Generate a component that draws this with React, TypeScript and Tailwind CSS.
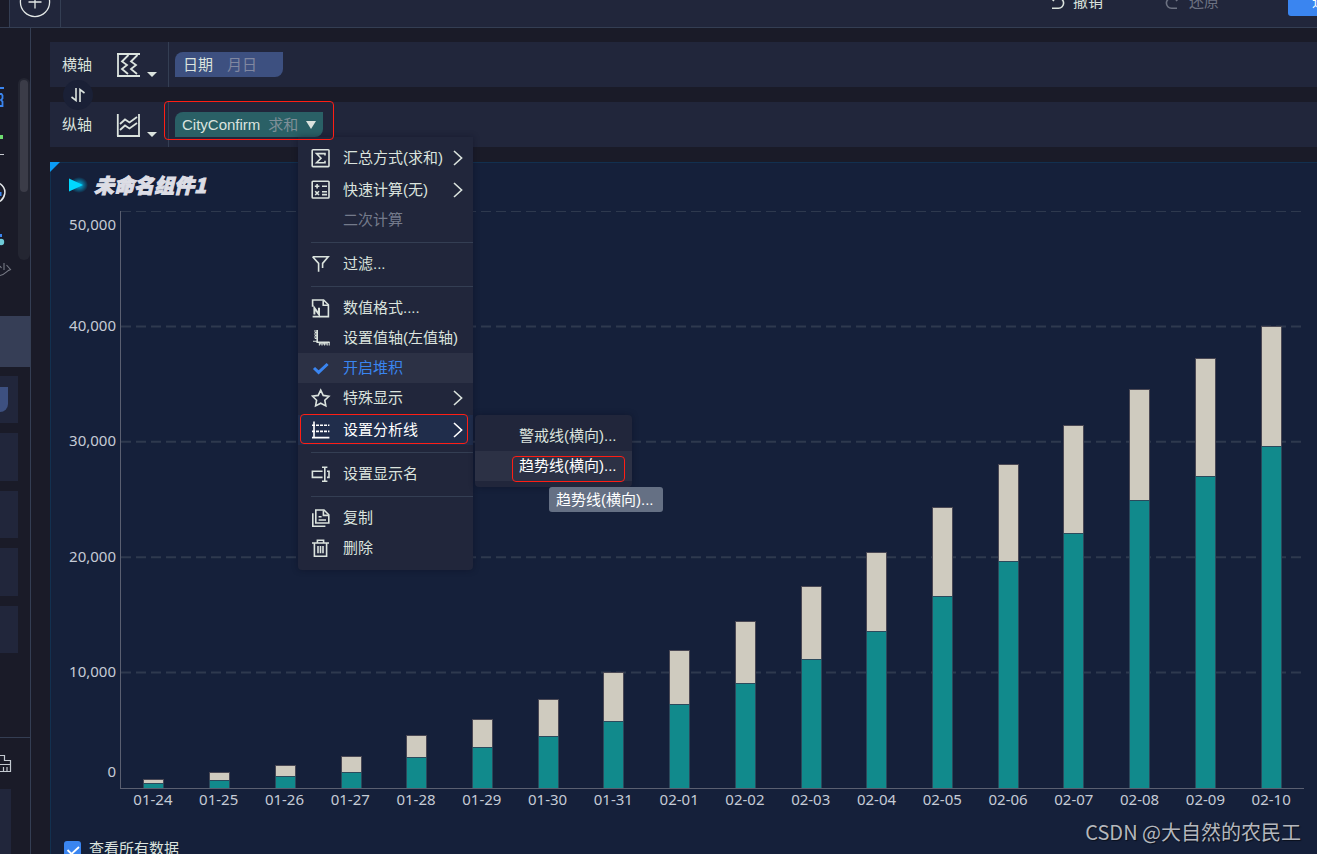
import type { ReactNode } from 'react';

type Day = { date: string; total: number; lower: number };

const MAX = 50000;

const days: Day[] = [
  { date: '01-24', total: 780, lower: 450 },
  { date: '01-25', total: 1360, lower: 670 },
  { date: '01-26', total: 1980, lower: 1020 },
  { date: '01-27', total: 2760, lower: 1390 },
  { date: '01-28', total: 4580, lower: 2680 },
  { date: '01-29', total: 6000, lower: 3540 },
  { date: '01-30', total: 7740, lower: 4500 },
  { date: '01-31', total: 10020, lower: 5800 },
  { date: '02-01', total: 11950, lower: 7250 },
  { date: '02-02', total: 14450, lower: 9080 },
  { date: '02-03', total: 17500, lower: 11150 },
  { date: '02-04', total: 20440, lower: 13570 },
  { date: '02-05', total: 24330, lower: 16630 },
  { date: '02-06', total: 28120, lower: 19680 },
  { date: '02-07', total: 31500, lower: 22060 },
  { date: '02-08', total: 34620, lower: 25000 },
  { date: '02-09', total: 37220, lower: 27050 },
  { date: '02-10', total: 40050, lower: 29640 },
];

function Icon({ children }: { children?: ReactNode }) {
  return (
    <svg viewBox="0 0 20 20" className="h-5 w-5 shrink-0" fill="none" stroke="currentColor" strokeWidth="1.6" aria-hidden="true">
      {children}
    </svg>
  );
}

const icons = {
  sum: (
    <>
      <rect x="1.2" y="1.8" width="16.8" height="16.8" rx="0.8" />
      <path d="M14 7.600V5.600H5.500L10 10.200 5.500 14.800H14v-2" />
    </>
  ),
  calc: (
    <>
      <rect x="1.2" y="1.200" width="16.8" height="16.8" rx="0.8" />
      <path d="M3.8 6.2h4.6M6.1 3.9v4.6M11 6.2h5M11 11.8h5M11 14.6h5M4.2 11.2l3.8 3.8M8 11.2L4.2 15" />
    </>
  ),
  filter: <path d="M1.6 2.8h15.6L11.6 9.400v4.600M1.600 2.800L7.600 9.400v8.400" />,
  number: (
    <>
      <path d="M1.600 8.800V2h11l4.800 4.800v11.800H1.600" />
      <path d="M12.200 2.400v4.800h4.800" />
      <path d="M3.400 16.600V10l4.600 6.400V9.800" strokeWidth="2" />
    </>
  ),
  axis: (
    <>
      <path d="M6.200 2v12.200h12.400" />
      <path d="M3 3h3M3 6h3M3 9h3M2 13.200h4M3.800 4.500h2M3.800 7.500h2M3.800 10.500h2" strokeWidth="1.1" />
      <path d="M8.400 14v3.400M11 14v3.400M13.600 14v3.400M16.200 14v3.400M18.200 14v3.400M9.700 14v2.600M12.300 14v2.600M14.900 14v2.600" strokeWidth="1.1" />
    </>
  ),
  check: <path d="M3 10l4.6 4.4L16.6 6" strokeWidth="3" />,
  star: <path d="M9.7 2.2l2.500 5.200 5.700.800-4.100 4 1 5.700-5.100-2.700-5.100 2.700 1-5.700-4.100-4 5.700-.800z" />,
  lines: (
    <>
      <path d="M3 1.400v16.500M1 17.600h17.400" />
      <path d="M1 5.200h3M1 11.400h3" />
      <path d="M5 5.200h13.400M5 11.400h13.400" strokeDasharray="3 1" />
    </>
  ),
  rename: (
    <>
      <path d="M11.600 7.200H1.400v6.200h10.200M16 7.200h2v6.200h-2" />
      <path d="M13.800 3.200v14M11 3.200h5.400M11 17.200h5.400" />
    </>
  ),
  copy: (
    <>
      <path d="M4.800 2h8.200l4.800 4.800v8.200H4.800z" />
      <path d="M12.400 2.400v5h5M7.600 8.800h3M7.600 12h7.400M1.800 5.200v13h12.600" />
    </>
  ),
  trash: <path d="M1 5h17M6.400 4.800V2.200h6.200v2.600M3.400 5.200v13h12.200v-13M7 8v7.200M9.500 8v7.200M12 8v7.200" />,
};

function MenuItem({
  icon,
  label,
  more,
  className = '',
}: {
  icon?: ReactNode;
  label: string;
  more?: boolean;
  className?: string;
}) {
  return (
    <button type="button" className={`flex h-[30px] w-full shrink-0 items-center pr-[9px] pl-[13px] text-left ${className}`}>
      <Icon>{icon}</Icon>
      <span className="ml-3 min-w-0 flex-1 whitespace-nowrap">{label}</span>
      {more && (
        <svg viewBox="0 0 12 16" className="h-4 w-3 shrink-0" fill="none" stroke="currentColor" strokeWidth="1.6" aria-hidden="true">
          <path d="M2 1l7.6 7L2 15" />
        </svg>
      )}
    </button>
  );
}

function Separator() {
  return <div className="mt-[7px] mb-[6px] ml-[13px] h-px shrink-0 bg-[#343e53]" />;
}

function ContextMenu() {
  return (
    <div className="absolute top-full left-[123px] z-20 flex w-[175px] flex-col rounded-b bg-[#21263b] pt-[6px] pb-[7px] text-[#dbe3de] shadow-[0_0_6px_rgba(10,14,30,0.45)]">
      <MenuItem icon={icons.sum} label="汇总方式(求和)" more className="mb-0.5" />
      <MenuItem icon={icons.calc} label="快速计算(无)" more />
      <MenuItem label="二次计算" className="text-[#747a8b]" />
      <Separator />
      <MenuItem icon={icons.filter} label="过滤..." />
      <Separator />
      <MenuItem icon={icons.number} label="数值格式...." />
      <MenuItem icon={icons.axis} label="设置值轴(左值轴)" />
      <MenuItem icon={icons.check} label="开启堆积" className="bg-[#2c3145] text-[#3a85f0]" />
      <MenuItem icon={icons.star} label="特殊显示" more className="mb-0.5" />
      <div className="relative">
        <MenuItem icon={icons.lines} label="设置分析线" more className="bg-[#202d4b] text-white" />
        <div className="pointer-events-none absolute -top-px right-[5px] left-0.5 h-[30px] rounded border border-[#ff1e14]" />
        <SubMenu />
      </div>
      <Separator />
      <MenuItem icon={icons.rename} label="设置显示名" />
      <Separator />
      <MenuItem icon={icons.copy} label="复制" />
      <MenuItem icon={icons.trash} label="删除" />
    </div>
  );
}

function SubMenu() {
  return (
    <div className="absolute top-0 left-[177px] w-[157px] rounded bg-[#21263b] py-[6px] shadow-[0_0_6px_rgba(10,14,30,0.45)]">
      <button type="button" className="flex h-[30px] w-full items-center pl-11 whitespace-nowrap">
        警戒线(横向)...
      </button>
      <div className="relative">
        <button type="button" className="flex h-[30px] w-full items-center bg-[#2c3145] pl-11 whitespace-nowrap text-white">
          趋势线(横向)...
        </button>
        <div className="pointer-events-none absolute top-[5px] right-[7px] left-[37px] h-[26px] rounded border border-[#ff1e14]" />
        <div role="tooltip" className="absolute top-9 left-[74px] flex h-[25px] items-center rounded-[3px] bg-[#657084] pr-[9px] pl-[7px] whitespace-nowrap text-white">
          趋势线(横向)...
        </div>
      </div>
    </div>
  );
}

function AxisRow({ label, icon, children }: { label: string; icon: ReactNode; children: ReactNode }) {
  return (
    <div className="flex h-[45px] shrink-0 bg-[#21263b]">
      <div className="flex w-[119px] shrink-0 items-center border-r border-[#343e53] pl-3">
        <span className="w-[53px]">{label}</span>
        <button type="button" aria-label={`${label}类型`} className="flex items-center gap-1.5">
          <svg viewBox="0 0 26 26" className="h-[26px] w-[26px]" fill="none" stroke="currentColor" strokeWidth="1.8" aria-hidden="true">
            {icon}
          </svg>
          <svg viewBox="0 0 10 5" className="mt-[19px] h-[5px] w-2.5" fill="currentColor" aria-hidden="true">
            <path d="M0 0h10L5 5z" />
          </svg>
        </button>
      </div>
      <div className="flex items-center pl-1.5">{children}</div>
    </div>
  );
}

function Header() {
  return (
    <header className="flex h-7 shrink-0 items-end overflow-hidden border-b border-[#343e53] bg-[#21263b]">
      <div className="h-full w-[9px] shrink-0 bg-[#1a1b28]" />
      <div className="flex h-[51px] w-[52px] shrink-0 items-center justify-center border-x border-[#343e53]">
        <button type="button" aria-label="添加" className="shrink-0">
          <svg viewBox="0 0 32 32" className="h-8 w-8" fill="none" stroke="#e3e8e6" strokeWidth="1.3">
            <circle cx="16" cy="16" r="14.6" />
            <path d="M9.5 16h13M16 9.500v13" />
          </svg>
        </button>
      </div>
      <div className="-mr-[51px] flex h-[51px] flex-1 items-center justify-end">
        <button type="button" className="mr-[62px] flex items-center gap-2">
          <svg viewBox="0 0 16 16" className="h-4 w-4" fill="none" stroke="currentColor" strokeWidth="1.6" aria-hidden="true">
            <path d="M5 1L2 4l3 3M2 4h7.500a5 5 0 0 1 0 10.200H3" />
          </svg>
          撤销
        </button>
        <button type="button" className="mr-[69px] flex items-center gap-2 text-[#6d7282]">
          <svg viewBox="0 0 16 16" className="h-4 w-4" fill="none" stroke="currentColor" strokeWidth="1.6" aria-hidden="true">
            <path d="M11 1l3 3-3 3M14 4H6.500a5 5 0 0 0 0 10.200H12" />
          </svg>
          还原
        </button>
        <button type="button" className="h-[29px] w-20 shrink-0 rounded-[3px] bg-[#3a85f0] pl-6 text-left whitespace-nowrap text-white">
          进入分析
        </button>
      </div>
    </header>
  );
}

function Sidebar() {
  return (
    <aside className="flex w-[31px] shrink-0 flex-col overflow-hidden border-r border-[#343e53]">
      <div className="flex h-[288px] shrink-0 items-start justify-between">
        <svg viewBox="0 0 18 288" className="h-[288px] w-[18px]" fill="none" strokeWidth="1.6" aria-hidden="true">
          <path d="M0 60h4M0 66h1.500l1 1.500v3L1 72l1.500 1.500V78H0" stroke="#3a85f0" strokeWidth="1.8" />
          <path d="M0 109h3" stroke="#6edc70" strokeWidth="4" />
          <path d="M0 126.500h4" stroke="#c6cad0" strokeWidth="1" />
          <path d="M0 155.500c3.500 2.500 5.500 6 4.700 10.500-.7 3.500-2.200 5.500-4.700 7.500" stroke="#e4e7ea" strokeWidth="1.5" />
          <path d="M0 164v4" stroke="#3a85f0" strokeWidth="3" />
          <path d="M0 207.500h2" stroke="#3a85f0" strokeWidth="3" />
          <circle cx="1" cy="214" r="3.2" fill="#6fcbd8" />
          <path d="M0 238l1.500 2M4 235v7M6.500 237l4 4.500-3 1.500M10.500 241.500C7 242 5 247 0 247.500" stroke="#777a85" strokeWidth="1.1" />
        </svg>
        <div className="mt-[50px] h-[182px] w-3 rounded-full bg-[#242632] p-0.5">
          <div className="h-28 w-2 rounded-full bg-[#3b3c48]" />
        </div>
      </div>
      <div className="h-[51px] shrink-0 bg-[#363e56]" />
      <div className="flex min-h-0 flex-1 flex-col gap-2.5 overflow-hidden pt-[9px] pr-3">
        <div className="flex h-[47px] shrink-0 items-center bg-[#21263b]">
          <div className="h-[25px] w-2 rounded-br-lg bg-[#3d5080]" />
        </div>
        <div className="h-12 shrink-0 bg-[#21263b]" />
        <div className="h-[47px] shrink-0 bg-[#21263b]" />
        <div className="h-12 shrink-0 bg-[#21263b]" />
        <div className="h-[47px] shrink-0 bg-[#21263b]" />
      </div>
      <div className="flex h-[117px] shrink-0 flex-col border-t border-[#343e53] pt-4">
        <svg viewBox="0 0 12 20" className="h-5 w-3 shrink-0" fill="none" stroke="#c3c9d0" strokeWidth="1.2" aria-hidden="true">
          <path d="M0 1.500h4.500v5h6v11H0M0 10.500h10.500M3.500 13v4M7 13v4" />
        </svg>
        <div className="mt-[15px] w-[11px] flex-1 bg-[#21263b]" />
      </div>
    </aside>
  );
}

function Chart() {
  return (
    <div className="flex min-h-0 flex-1 flex-col pr-[13px] font-['Noto_Sans',sans-serif] text-[15px] text-[#c5cbd6]">
      <div className="flex min-h-0 flex-1">
        <div className="grid w-[69px] shrink-0 grid-rows-5 pr-1 text-right leading-5">
          <span className="mt-[3px]">50,000</span>
          <span className="-mt-3">40,000</span>
          <span className="-mt-3">30,000</span>
          <span className="-mt-3">20,000</span>
          <div className="-mt-3 flex flex-col justify-between pb-2">
            <span>10,000</span>
            <span>0</span>
          </div>
        </div>
        <div className="relative flex flex-1 border-b border-l border-[#5a5f70]">
          <svg className="absolute inset-0 h-full w-full" aria-hidden="true">
            {['0%', '20%', '40%', '60%', '80%'].map((y) => (
              <line key={y} x1="0" x2="100%" y1={y} y2={y} stroke="#2e394e" strokeWidth="2" strokeDasharray="10 5" />
            ))}
          </svg>
          {days.map((d) => (
            <div key={d.date} className="relative flex flex-1 flex-col items-center justify-end">
              <div
                className="w-[21px] border border-b-0 border-[#4a4854] bg-[#cfcbbf]"
                style={{ height: `${((d.total - d.lower) / MAX) * 100}%` }}
              />
              <div className="w-[21px] border border-b-0 border-[#2b4a5c] bg-[#118a8c]" style={{ height: `${(d.lower / MAX) * 100}%` }} />
            </div>
          ))}
        </div>
      </div>
      <div className="flex h-6 shrink-0 items-start pl-[69px]">
        {days.map((d) => (
          <div key={d.date} className="flex-1 text-center leading-5">
            {d.date}
          </div>
        ))}
      </div>
    </div>
  );
}

export default function App() {
  return (
    <div className="relative flex h-screen flex-col overflow-hidden bg-[#1a1b28] font-['Liberation_Sans','Noto_Sans_CJK_SC',sans-serif] text-[15px] leading-5 text-[#dbe3de]">
      <Header />
      <div className="flex min-h-0 flex-1">
        <Sidebar />
        <main className="flex min-w-0 flex-1 flex-col gap-[15px] pt-3.5 pl-[19px]">
          <section className="relative flex flex-col gap-[15px]">
            <AxisRow label="横轴" icon={<path d="M2 2h23M2 24h23M3 2v22M13.500 3L7 9.500l5 3.500-5 4 6 5M22.500 3L16 9.500l5 3.500-5 4 6 5" />}>
              <div className="flex h-[25px] w-[108px] items-center gap-3.5 rounded-tl-lg rounded-br-lg bg-[#3d5080] pl-2">
                <span>日期</span>
                <span className="text-[#8087a0]">月日</span>
              </div>
            </AxisRow>
            <AxisRow label="纵轴" icon={<path d="M2 24h23M2.800 2v22M24 2v22M5 12l5-4.500 4.500 3L22 5M5 18l5-4.500 4.500 3L22 11" />}>
              <div className="relative">
                <button type="button" className="flex h-[25px] w-[148px] items-center rounded-tl-lg rounded-br-lg bg-[#2a6066] pl-[7px]">
                  <span>CityConfirm</span>
                  <span className="ml-2 text-[#7f8f98]">求和</span>
                  <svg viewBox="0 0 10 8" className="ml-2 h-2 w-2.5" fill="currentColor" aria-hidden="true">
                    <path d="M0 0h10L5 8z" />
                  </svg>
                </button>
                <ContextMenu />
                <div className="pointer-events-none absolute -top-[11px] -left-[11px] z-30 h-[39px] w-[170px] rounded border border-[#ff1e14]" />
              </div>
            </AxisRow>
            <button type="button" aria-label="交换横纵轴" className="absolute top-[38px] left-[13px] flex h-[30px] w-[30px] items-center justify-center rounded-full bg-[#1a2036]">
              <svg viewBox="0 0 16 14" className="h-3.5 w-4" fill="none" stroke="currentColor" strokeWidth="1.6" aria-hidden="true">
                <path d="M6 0v12.500L1.500 9M10 14V1.500L14.500 5" />
              </svg>
            </button>
          </section>
          <section className="relative flex min-h-0 flex-1 flex-col border-t border-l border-[#12304f] bg-[#15203a]">
            <svg viewBox="0 0 10 10" className="absolute -top-px -left-px h-2.5 w-2.5" fill="#0a9bf5" aria-hidden="true">
              <path d="M0 0h10L0 10z" />
            </svg>
            <div className="flex h-12 shrink-0 items-center pb-1 pl-[17px]">
              <svg viewBox="0 0 24 24" className="h-6 w-6" aria-hidden="true">
                <defs>
                  <radialGradient id="glow">
                    <stop offset="0" stopColor="#00b4e6" />
                    <stop offset="1" stopColor="#00b4e6" stopOpacity="0" />
                  </radialGradient>
                </defs>
                <ellipse cx="11" cy="12" rx="9" ry="8" fill="url(#glow)" />
                <path d="M1 5.500L15 12 1 18.500z" fill="#00d8ff" />
              </svg>
              <h1 className="ml-0.5 font-['Noto_Sans_CJK_SC',sans-serif] text-[20px] leading-6 font-black text-[#dcdde5] italic [-webkit-text-stroke:1px_#dcdde5]">未命名组件1</h1>
            </div>
            <Chart />
            <div className="h-[41px] shrink-0 overflow-hidden pt-[26px] pl-[13px]">
              <label className="flex items-center gap-2">
                <span className="grid h-[17px] w-[17px] place-items-center">
                  <input type="checkbox" defaultChecked className="peer col-start-1 row-start-1 h-[17px] w-[17px] appearance-none rounded-[3px] bg-[#2f3850] checked:bg-[#3a85f0]" />
                  <svg viewBox="0 0 17 17" className="pointer-events-none col-start-1 row-start-1 h-[17px] w-[17px] opacity-0 peer-checked:opacity-100" fill="none" stroke="#fff" strokeWidth="1.8" aria-hidden="true">
                    <path d="M3.500 9l4 4L15 6" />
                  </svg>
                </span>
                查看所有数据
              </label>
            </div>
          </section>
        </main>
      </div>
      <div className="pointer-events-none absolute right-4 bottom-2.5 font-['Noto_Sans_CJK_SC',sans-serif] text-[20px] leading-6 text-[#b4b7bd] [text-shadow:1px_1px_1px_#0008]">
        CSDN @大自然的农民工
      </div>
    </div>
  );
}
